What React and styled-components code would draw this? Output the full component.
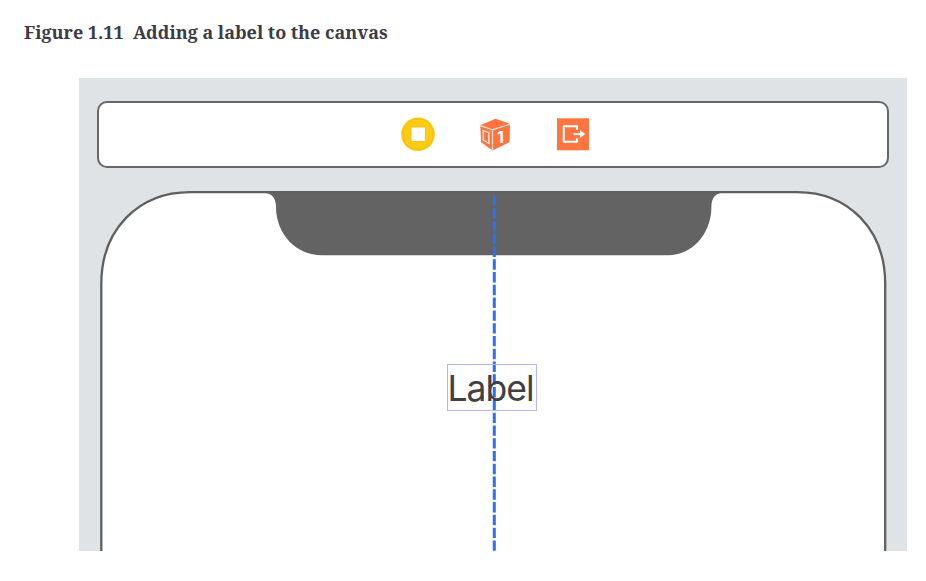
import React from "react";
import styled, { createGlobalStyle } from "styled-components";

const Global = createGlobalStyle`
  body { margin: 0; background: #fff; }
`;

const Figure = styled.figure`
  box-sizing: border-box;
  width: 926px;
  height: 581px;
  margin: 0;
  padding: 20px 19px 30px 24px;
  display: flex;
  flex-direction: column;
  overflow: hidden;
`;

const Caption = styled.figcaption`
  height: 26px;
  margin-bottom: 32px;
  white-space: pre;
  color: #3d3b45;
  font: 700 18px/25px "Noto Serif", "Droid Serif", "DejaVu Serif", serif;
  letter-spacing: -0.02px;
`;

const Canvas = styled.div`
  box-sizing: border-box;
  width: 828px;
  height: 473px;
  margin-left: 55px;
  padding: 23px 18px 0;
  background: #dfe3e6;
  display: flex;
  flex-direction: column;
  overflow: hidden;
`;

const Toolbar = styled.div`
  box-sizing: border-box;
  flex: none;
  height: 67px;
  border: 2px solid #686868;
  border-radius: 10px;
  background: #fff;
  display: flex;
  align-items: center;
  justify-content: center;
  gap: 44px;
  padding-left: 4px;
`;

const Icon = styled.svg`
  width: 34px;
  height: 36px;
  flex: none;
  overflow: visible;
`;

const Digit = styled.text`
  fill: #fff;
  font: 700 16px Inter, "Liberation Sans", sans-serif;
`;

const Device = styled.div`
  position: relative;
  width: 792px;
  height: 383px;
  flex: none;
  display: flex;
  justify-content: center;
  margin-top: 22px;
`;

const Drawing = styled.svg`
  position: absolute;
  inset: 0;
  width: 792px;
  height: 383px;
`;

const Label = styled.div`
  position: relative;
  box-sizing: border-box;
  width: 90px;
  height: 47px;
  margin-top: 174px;
  margin-left: -3px;
  border: 1px solid #b4b5fa;
  color: #414141;
  font: 400 35.5px/48px Inter, "Liberation Sans", sans-serif;
  letter-spacing: -1px;
`;

export default function App() {
  return (
    <Figure>
      <Global />
      <Caption>{"Figure 1.11  Adding a label to the canvas"}</Caption>
      <Canvas>
        <Toolbar>
          <Icon viewBox="0 0.7 34 36">
            <circle cx="18" cy="18" r="16.8" fill="#fdcb12" />
            <circle cx="18" cy="18" r="15.4" fill="none" stroke="#f3bf0d" strokeWidth="1" />
            <rect x="11" y="10.8" width="14.4" height="14.4" rx="1" fill="#fff" stroke="#edb90d" strokeWidth="0.8" />
          </Icon>
          <Icon viewBox="-0.5 0.7 34 36">
            <path d="M17 2.5 31.5 7.5 31 26 14 34.2 2.5 26 1.8 9Z" fill="#fc7440" />
            <path d="M2 9.3 14 13.5 31.5 7.8M14 13.5V34" fill="none" stroke="#ffe0d4" strokeWidth="1.2" />
            <path d="M4.8 14.3 10.3 16.3V27L4.8 23.8Z" fill="none" stroke="#ffe0d4" strokeWidth="1.5" />
            <Digit x="18.5" y="27">1</Digit>
          </Icon>
          <Icon viewBox="0 0.7 34 36">
            <rect x="1" y="2" width="32" height="32" fill="#fd7540" />
            <path d="M21 13.5V10H7.8V25.5H21V22" fill="none" stroke="#fff" strokeWidth="2.1" strokeLinejoin="round" />
            <path d="M17.5 17.8H26" fill="none" stroke="#fff" strokeWidth="2" />
            <path d="M24 13.8 29.2 17.8 24 21.8Z" fill="#fff" />
          </Icon>
        </Toolbar>
        <Device>
          <Drawing viewBox="97 190 792 383">
            <path d="M101.3 600V284C101.3 229 139 192.1 190 192.1H797C848 192.1 885.2 229 885.2 284V600" fill="#fff" stroke="#5f5f5f" strokeWidth="2.3" />
            <path d="M262 192.6C271 192.8 276 197 276 207C276 235 297 255.3 322 255.3H668C691 255.3 711.4 235 711.4 207C711.4 197 716 192.8 725 192.6Z" fill="#636363" />
            <path d="M494.3 195.4V551" stroke="#2c6ffa" strokeWidth="3" strokeDasharray="10.4 2.378" />
          </Drawing>
          <Label>Label</Label>
        </Device>
      </Canvas>
    </Figure>
  );
}
